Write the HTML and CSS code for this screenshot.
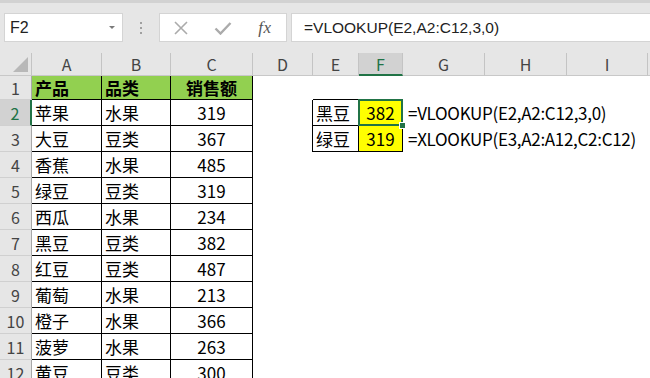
FILE: index.html
```html
<!DOCTYPE html>
<html lang="zh">
<head>
<meta charset="utf-8">
<title>Sheet</title>
<link rel="stylesheet" href="styles.css">
</head>
<body>
<div class="app">
  <div class="toolbar">
    <div class="namebox"><span class="nb-text">F2</span><span class="nb-arrow"></span></div>
    <div class="dots"><i></i><i></i><i></i></div>
    <div class="iconbox">
      <span class="slot">
        <svg width="14" height="14" viewBox="0 0 14 14"><path d="M1 1L13 13M13 1L1 13" stroke="#ababab" stroke-width="1.6" fill="none"/></svg>
      </span>
      <span class="slot">
        <svg width="18" height="14" viewBox="0 0 18 14"><path d="M1.5 7.5L6.5 12.5L16.5 2" stroke="#ababab" stroke-width="2.4" fill="none"/></svg>
      </span>
      <span class="slot fx">fx</span>
    </div>
    <div class="formula">=VLOOKUP(E2,A2:C12,3,0)</div>
  </div>

  <div class="sheet">
    <div class="row hdr">
      <div class="c rh corner"><span class="tri"></span></div>
      <div class="c ca ch">A</div>
      <div class="c cb ch">B</div>
      <div class="c cc ch">C</div>
      <div class="c cd ch">D</div>
      <div class="c ce ch">E</div>
      <div class="c cf ch sel">F</div>
      <div class="c cg ch">G</div>
      <div class="c chh ch">H</div>
      <div class="c ci ch">I</div>
      <div class="c cj ch"></div>
    </div>

    <div class="row r1">
      <div class="c rh">1</div>
      <div class="c ca t head">产品</div>
      <div class="c cb t head">品类</div>
      <div class="c cc t head num">销售额</div>
      <div class="c cd"></div>
      <div class="c ce bb"></div>
      <div class="c cf bb"></div>
      <div class="c cg"></div>
    </div>

    <div class="row">
      <div class="c rh rsel">2</div>
      <div class="c ca t">苹果</div>
      <div class="c cb t">水果</div>
      <div class="c cc t num">319</div>
      <div class="c cd br"></div>
      <div class="c ce t">黑豆</div>
      <div class="c cf t num yellow active">382</div>
      <div class="c cg over">=VLOOKUP(E2,A2:C12,3,0)</div>
    </div>

    <div class="row">
      <div class="c rh">3</div>
      <div class="c ca t">大豆</div>
      <div class="c cb t">豆类</div>
      <div class="c cc t num">367</div>
      <div class="c cd br"></div>
      <div class="c ce t">绿豆</div>
      <div class="c cf t num yellow">319</div>
      <div class="c cg over">=XLOOKUP(E3,A2:A12,C2:C12)</div>
    </div>

    <div class="row">
      <div class="c rh">4</div>
      <div class="c ca t">香蕉</div>
      <div class="c cb t">水果</div>
      <div class="c cc t num">485</div>
    </div>
    <div class="row">
      <div class="c rh">5</div>
      <div class="c ca t">绿豆</div>
      <div class="c cb t">豆类</div>
      <div class="c cc t num">319</div>
    </div>
    <div class="row">
      <div class="c rh">6</div>
      <div class="c ca t">西瓜</div>
      <div class="c cb t">水果</div>
      <div class="c cc t num">234</div>
    </div>
    <div class="row">
      <div class="c rh">7</div>
      <div class="c ca t">黑豆</div>
      <div class="c cb t">豆类</div>
      <div class="c cc t num">382</div>
    </div>
    <div class="row">
      <div class="c rh">8</div>
      <div class="c ca t">红豆</div>
      <div class="c cb t">豆类</div>
      <div class="c cc t num">487</div>
    </div>
    <div class="row">
      <div class="c rh">9</div>
      <div class="c ca t">葡萄</div>
      <div class="c cb t">水果</div>
      <div class="c cc t num">213</div>
    </div>
    <div class="row">
      <div class="c rh">10</div>
      <div class="c ca t">橙子</div>
      <div class="c cb t">水果</div>
      <div class="c cc t num">366</div>
    </div>
    <div class="row">
      <div class="c rh">11</div>
      <div class="c ca t">菠萝</div>
      <div class="c cb t">水果</div>
      <div class="c cc t num">263</div>
    </div>
    <div class="row">
      <div class="c rh">12</div>
      <div class="c ca t">黄豆</div>
      <div class="c cb t">豆类</div>
      <div class="c cc t num">300</div>
    </div>
  </div>
</div>
</body>
</html>
```

FILE: styles.css
```css
html, body {
  margin: 0;
  padding: 0;
  background: #ffffff;
  overflow: hidden;
}

.app {
  width: 650px;
  height: 378px;
  overflow: hidden;
  font-family: "Noto Sans CJK SC", "Liberation Sans", sans-serif;
}

/* ---------- formula bar ---------- */
.toolbar {
  height: 53px;
  box-sizing: border-box;
  background: #e6e6e6;
  border-top: 3px solid #d2d2d2;
  padding-top: 10px;
  display: flex;
  align-items: flex-start;
}

.namebox {
  margin-left: 4px;
  width: 119px;
  height: 29px;
  box-sizing: border-box;
  background: #ffffff;
  border: 1px solid #d4d4d4;
  display: flex;
  align-items: center;
  justify-content: space-between;
  padding: 0 7px 0 5px;
  font-family: "Liberation Sans", Arial, sans-serif;
  font-size: 16px;
  color: #222222;
}

.nb-arrow {
  width: 0;
  height: 0;
  border-left: 3px solid transparent;
  border-right: 3px solid transparent;
  border-top: 3px solid #7a7a7a;
}

.dots {
  width: 36px;
  height: 29px;
  display: flex;
  flex-direction: column;
  align-items: center;
  justify-content: center;
  gap: 3px;
}
.dots i {
  display: block;
  width: 2px;
  height: 2px;
  background: #a0a0a0;
}

.iconbox {
  width: 128px;
  height: 29px;
  box-sizing: border-box;
  background: #ffffff;
  border: 1px solid #d4d4d4;
  display: flex;
  align-items: center;
}
.slot {
  width: 42px;
  display: flex;
  justify-content: center;
  align-items: center;
}
.fx {
  font-family: "Liberation Serif", "Times New Roman", serif;
  font-style: italic;
  font-size: 17px;
  color: #555555;
  letter-spacing: 0.5px;
}

.formula {
  flex: 1;
  margin-left: 4px;
  margin-right: -20px;
  height: 29px;
  box-sizing: border-box;
  background: #ffffff;
  border: 1px solid #d4d4d4;
  padding-left: 12px;
  display: flex;
  align-items: center;
  font-family: "Liberation Sans", Arial, sans-serif;
  font-size: 15.5px;
  color: #222222;
  white-space: nowrap;
}

/* ---------- sheet ---------- */
.sheet {
  display: flex;
  flex-direction: column;
}

.row {
  display: flex;
  height: 26px;
}
.row.hdr { height: 23px; }
.row.r1 { height: 24px; }

.c {
  flex: none;
  box-sizing: border-box;
  height: 100%;
  display: flex;
  align-items: center;
  font-size: 17px;
  line-height: 20px;
  color: #000000;
  white-space: nowrap;
}

.rh { width: 32px; }
.ca { width: 70px; }
.cb { width: 69px; }
.cc { width: 82px; }
.cd { width: 60px; }
.ce { width: 46px; }
.cf { width: 44px; }
.cg { width: 82px; }
.chh { width: 82px; }
.ci { width: 81px; }
.cj { width: 40px; }

/* column headers */
.ch {
  background: #e6e6e6;
  border-right: 1px solid #c4c4c4;
  border-bottom: 1px solid #c8c8c8;
  justify-content: center;
  font-size: 16px;
  color: #444444;
}
.ch.sel {
  background: #d2d2d2;
  color: #217346;
  border-bottom: 2px solid #217346;
}

/* row headers */
.rh {
  background: #e6e6e6;
  border-right: 1px solid #a8a8a8;
  border-bottom: 1px solid #d0d0d0;
  justify-content: center;
  font-size: 16px;
  color: #444444;
}
.rh.rsel {
  background: #d2d2d2;
  color: #217346;
  border-right: 2px solid #217346;
}

.corner {
  position: relative;
  border-bottom: 1px solid #c8c8c8;
  border-right: 1px solid #c4c4c4;
}
.tri {
  position: absolute;
  right: 3px;
  bottom: 3px;
  width: 0;
  height: 0;
  border-left: 15px solid transparent;
  border-bottom: 15px solid #b8b8b8;
}

/* bordered data cells */
.t {
  border-right: 1px solid #000000;
  border-bottom: 1px solid #000000;
  padding-left: 3px;
}
.t.num {
  justify-content: center;
  padding-left: 0;
}
.head {
  background: #92d050;
  font-weight: bold;
}
.yellow { background: #ffff00; }

.bb { border-bottom: 1px solid #000000; }
.br { border-right: 1px solid #000000; }

.over {
  padding-left: 5px;
  overflow: visible;
  letter-spacing: -0.3px;
}

.active { position: relative; }
.active::after {
  content: "";
  position: absolute;
  left: -1px;
  top: -1px;
  right: -1px;
  bottom: -1px;
  border: 2px solid #217346;
}
.active::before {
  content: "";
  position: absolute;
  right: -4px;
  bottom: -4px;
  width: 5px;
  height: 5px;
  background: #217346;
  border: 1px solid #ffffff;
  z-index: 2;
}
```
